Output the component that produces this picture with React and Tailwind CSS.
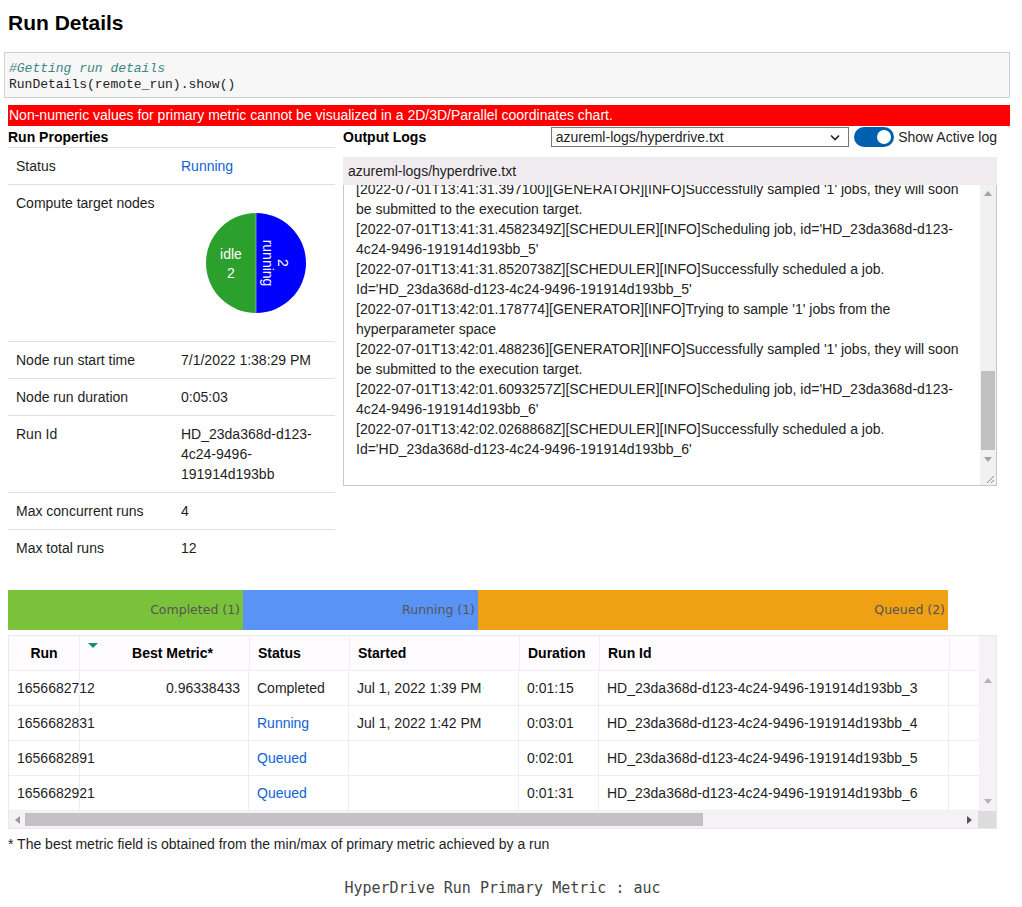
const logLines = [
  "[2022-07-01T13:41:31.397100][GENERATOR][INFO]Successfully sampled '1' jobs, they will soon",
  "be submitted to the execution target.",
  "[2022-07-01T13:41:31.4582349Z][SCHEDULER][INFO]Scheduling job, id='HD_23da368d-d123-",
  "4c24-9496-191914d193bb_5'",
  "[2022-07-01T13:41:31.8520738Z][SCHEDULER][INFO]Successfully scheduled a job.",
  "Id='HD_23da368d-d123-4c24-9496-191914d193bb_5'",
  "[2022-07-01T13:42:01.178774][GENERATOR][INFO]Trying to sample '1' jobs from the",
  "hyperparameter space",
  "[2022-07-01T13:42:01.488236][GENERATOR][INFO]Successfully sampled '1' jobs, they will soon",
  "be submitted to the execution target.",
  "[2022-07-01T13:42:01.6093257Z][SCHEDULER][INFO]Scheduling job, id='HD_23da368d-d123-",
  "4c24-9496-191914d193bb_6'",
  "[2022-07-01T13:42:02.0268868Z][SCHEDULER][INFO]Successfully scheduled a job.",
  "Id='HD_23da368d-d123-4c24-9496-191914d193bb_6'",
]

const runs = [
  { run: "1656682712", metric: "0.96338433", status: "Completed", started: "Jul 1, 2022 1:39 PM", duration: "0:01:15", id: "HD_23da368d-d123-4c24-9496-191914d193bb_3" },
  { run: "1656682831", metric: "", status: "Running", started: "Jul 1, 2022 1:42 PM", duration: "0:03:01", id: "HD_23da368d-d123-4c24-9496-191914d193bb_4" },
  { run: "1656682891", metric: "", status: "Queued", started: "", duration: "0:02:01", id: "HD_23da368d-d123-4c24-9496-191914d193bb_5" },
  { run: "1656682921", metric: "", status: "Queued", started: "", duration: "0:01:31", id: "HD_23da368d-d123-4c24-9496-191914d193bb_6" },
]

function Arrow({ dir, className }) {
  const pts = {
    up: "0,5 4,0 8,5",
    down: "0,0 8,0 4,5",
    left: "5,0 5,8 0,4",
    right: "0,0 0,8 5,4",
  }[dir]
  const vertical = dir === "up" || dir === "down"
  return (
    <svg width={vertical ? 8 : 5} height={vertical ? 5 : 8} viewBox={vertical ? "0 0 8 5" : "0 0 5 8"} className={className}>
      <polygon points={pts} fill="currentColor" />
    </svg>
  )
}

function PropRow({ label, children, last }) {
  return (
    <div className={`flex ${last ? "" : "border-b border-[#dedede]"}`}>
      <div className="w-[165px] pl-2 py-2 leading-5">{label}</div>
      <div className="flex-1 pl-2 py-2 leading-5">{children}</div>
    </div>
  )
}

function Pie() {
  const ff = "Liberation Sans, Arial, sans-serif"
  return (
    <svg width="101" height="101" viewBox="0 0 101 101">
      <path d="M50 0 A50 50 0 0 0 50 100 Z" fill="#2ca02c" />
      <path d="M50 0 A50 50 0 0 1 50 100 Z" fill="#0000ff" />
      <line x1="50" y1="0" x2="50" y2="100" stroke="#9aa8c8" strokeWidth="0.8" />
      <text x="25" y="46" fill="#fff" fontSize="14" textAnchor="middle" fontFamily={ff}>idle</text>
      <text x="25" y="65" fill="#fff" fontSize="14" textAnchor="middle" fontFamily={ff}>2</text>
      {/* rotated label: "running" sits on the left, count on the right */}
      <g transform="rotate(90 67 50)">
        <text x="67" y="60" fill="#fff" fontSize="14" textAnchor="middle" fontFamily={ff}>running</text>
        <text x="67" y="45" fill="#fff" fontSize="14" textAnchor="middle" fontFamily={ff}>2</text>
      </g>
    </svg>
  )
}

export default function App() {
  const font = { fontFamily: '"Liberation Sans", Arial, sans-serif' }
  return (
    <div className="w-[1022px] min-h-[907px] bg-white text-[14px] text-[#1e1e1e]" style={font}>
      {/* Title */}
      <h1 className="ml-2 pt-[11px] text-[21px] leading-6 font-bold text-black">Run Details</h1>

      {/* Code cell */}
      <div className="ml-1 mt-[17px] w-[1006px] h-[46px] border border-[#cfcfcf] bg-[#f7f7f7] px-1 pt-[8px] pb-1 text-[13px] leading-4 text-[#222]" style={{ fontFamily: '"Liberation Mono", "Courier New", monospace' }}>
        <div className="italic text-[#3b8787]">#Getting run details</div>
        <div>RunDetails(remote_run).show()</div>
      </div>

      {/* Error bar */}
      <div className="ml-2 mt-[7px] w-[1002px] h-[21px] bg-[#ff0000] text-white leading-[21px] pl-px">
        Non-numeric values for primary metric cannot be visualized in a 2D/3D/Parallel coordinates chart.
      </div>

      {/* Widget */}
      <div className="ml-2 w-[989px]">
        <div className="mt-px flex items-start gap-2">
          {/* Run properties */}
          <div className="w-[327px]">
            <div className="h-[21px] leading-5 font-bold text-black border-b border-[#dedede]">Run Properties</div>
            <PropRow label="Status">
              <span className="text-[#0f62d6]">Running</span>
            </PropRow>
            <div className="flex h-[157px] border-b border-[#dedede]">
              <div className="w-[165px] pl-2 py-2 leading-5">Compute target nodes</div>
              <div className="flex-1 flex items-center justify-center pl-1">
                <Pie />
              </div>
            </div>
            <PropRow label="Node run start time">7/1/2022 1:38:29 PM</PropRow>
            <PropRow label="Node run duration">0:05:03</PropRow>
            <PropRow label="Run Id">
              <div>HD_23da368d-d123-</div>
              <div>4c24-9496-</div>
              <div>191914d193bb</div>
            </PropRow>
            <PropRow label="Max concurrent runs">4</PropRow>
            <PropRow label="Max total runs" last>12</PropRow>
          </div>

          {/* Output logs */}
          <div className="w-[654px]">
            <div className="flex items-center h-5">
              <div className="w-[208px] font-bold text-black leading-5">Output Logs</div>
              <div className="w-[299px] h-5 border border-[#767676] bg-white flex items-center justify-between pl-1 pr-2">
                <span className="leading-4">azureml-logs/hyperdrive.txt</span>
                <svg width="10" height="7" viewBox="0 0 10 7">
                  <path d="M1 1.5 L5 5.5 L9 1.5" fill="none" stroke="#222" strokeWidth="1.6" />
                </svg>
              </div>
              <div className="ml-[5px] w-10 h-5 rounded-full bg-[#0060ad] flex items-center justify-end pr-[3px]">
                <div className="w-[14px] h-[14px] rounded-full bg-white" />
              </div>
              <span className="ml-1 whitespace-nowrap">Show Active log</span>
            </div>
            <div className="mt-[10px] h-7 bg-[#efebef] leading-7 pl-[5px]">azureml-logs/hyperdrive.txt</div>
            <div className="h-[301px] border border-t-0 border-[#c8c8c8] flex">
              <div className="flex-1 overflow-hidden pl-3">
                <div className="-mt-[6px] leading-5 text-[#222]" style={{ fontFamily: '"Liberation Sans Narrow", "Arial Narrow", "Liberation Sans", sans-serif' }}>
                  {logLines.map((l, i) => (
                    <div key={i} className="whitespace-nowrap">{l}</div>
                  ))}
                </div>
              </div>
              <div className="w-4 flex flex-col items-center bg-[#f1f1f1]">
                <div className="h-4 flex items-center justify-center text-[#a3a3a3]"><Arrow dir="up" /></div>
                <div className="flex-1 w-full relative">
                  <div className="absolute left-px right-px top-[170px] h-[79px] bg-[#c1c1c1]" />
                </div>
                <div className="h-4 flex items-center justify-center text-[#a3a3a3]"><Arrow dir="down" /></div>
                <div className="h-[18px] w-full bg-[#f1f1f1] flex items-end justify-end pr-px pb-px">
                  <svg width="9" height="9" viewBox="0 0 9 9">
                    <path d="M1 8 L8 1 M5 8 L8 5" stroke="#8a8a8a" strokeWidth="1" />
                  </svg>
                </div>
              </div>
            </div>
          </div>
        </div>

        {/* Status bar */}
        <div className="mt-6 flex h-10 w-[940px] text-[12.5px] text-[#555]" style={{ fontFamily: '"DejaVu Sans", Verdana, sans-serif' }}>
          <div className="w-[235px] bg-[#7bc23b] flex items-center justify-end pr-[3px]">Completed (1)</div>
          <div className="w-[235px] bg-[#5a93f6] flex items-center justify-end pr-[3px]">Running (1)</div>
          <div className="w-[470px] bg-[#f0a013] flex items-center justify-end pr-[3px]">Queued (2)</div>
        </div>

        {/* Runs table */}
        <div className="mt-[5px] border border-[#ebe8eb]">
          <div className="flex">
            <div className="w-[970px]">
              <div className="flex h-[35px] bg-[#fdfbfe] border-b border-[#efedef] font-bold text-black">
                <div className="w-[71px] border-r border-[#efedef] flex items-center justify-center">Run</div>
                <div className="relative w-[170px] border-r border-[#efedef] flex items-center justify-end pr-9">
                  <svg width="10" height="5" viewBox="0 0 10 5" className="absolute left-[8px] top-[7px]">
                    <polygon points="0,0 10,0 5,5" fill="#12946a" />
                  </svg>
                  Best Metric*
                </div>
                <div className="w-[100px] border-r border-[#efedef] flex items-center pl-2">Status</div>
                <div className="w-[170px] border-r border-[#efedef] flex items-center pl-2">Started</div>
                <div className="w-[80px] border-r border-[#efedef] flex items-center pl-2">Duration</div>
                <div className="w-[350px] border-r border-[#efedef] flex items-center pl-2">Run Id</div>
                <div className="w-[29px]" />
              </div>
              {runs.map((r) => (
                <div key={r.run} className="flex h-[35px] border-b border-[#efedef] bg-white">
                  <div className="w-[71px] flex items-center pl-2 whitespace-nowrap">{r.run}</div>
                  <div className="w-[170px] border-l border-r border-[#efedef] -ml-px flex items-center justify-end pr-2">{r.metric}</div>
                  <div className={`w-[100px] border-r border-[#efedef] flex items-center pl-2 ${r.status === "Completed" ? "" : "text-[#0f62d6]"}`}>{r.status}</div>
                  <div className="w-[170px] border-r border-[#efedef] flex items-center pl-2">{r.started}</div>
                  <div className="w-[80px] border-r border-[#efedef] flex items-center pl-2">{r.duration}</div>
                  <div className="w-[350px] border-r border-[#efedef] flex items-center pl-2 whitespace-nowrap">{r.id}</div>
                  <div className="w-[29px]" />
                </div>
              ))}
            </div>
            <div className="w-[18px] bg-[#f5f2f5] flex flex-col">
              <div className="h-[35px]" />
              <div className="flex-1 flex flex-col items-center justify-between py-[7px] text-[#b4b2b4]">
                <Arrow dir="up" />
                <Arrow dir="down" />
              </div>
            </div>
          </div>
          <div className="flex h-[17px]">
            <div className="w-[970px] bg-[#f5f2f5] flex items-center px-[6px] text-[#9a989a]">
              <Arrow dir="left" />
              <div className="ml-[5px] h-[13px] w-[678px] bg-[#c3c1c4]" />
              <div className="flex-1" />
              <Arrow dir="right" className="text-[#555]" />
            </div>
            <div className="w-[18px] bg-[#dcdcdc]" />
          </div>
        </div>

        <div className="mt-[5px] leading-5">* The best metric field is obtained from the min/max of primary metric achieved by a run</div>
      </div>

      <div className="mt-6 w-[1005px] text-center leading-5 text-[15px] text-[#444]" style={{ fontFamily: '"DejaVu Sans Mono", monospace' }}>
        HyperDrive Run Primary Metric : auc
      </div>
    </div>
  )
}
